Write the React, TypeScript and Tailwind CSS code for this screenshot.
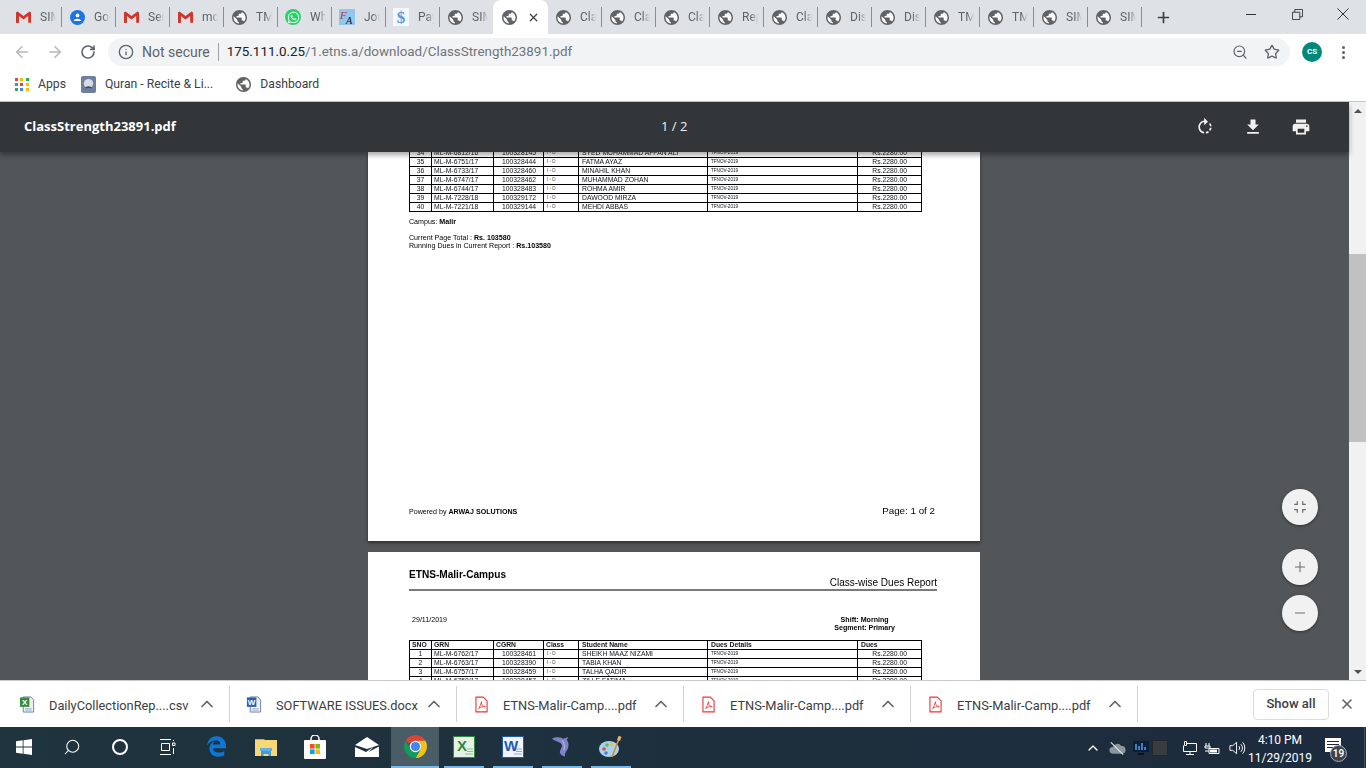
import React from 'react';
import {
  ArrowLeft,
  ArrowRight,
  ChevronUp,
  Info,
  Minus,
  Plus,
  RotateCw,
  Search,
  Star,
  X,
  ZoomOut,
} from 'lucide-react';
import { FaWhatsapp, FaEdgeLegacy } from 'react-icons/fa';

const GLOBE =
  'M12 2C6.48 2 2 6.48 2 12s4.48 10 10 10 10-4.48 10-10S17.52 2 12 2zm-1 17.93c-3.95-.49-7-3.85-7-7.93 0-.62.08-1.21.21-1.79L9 15v1c0 1.1.9 2 2 2v1.93zm6.9-2.54c-.26-.81-1-1.39-1.9-1.39h-1v-3c0-.55-.45-1-1-1H8v-2h2c.55 0 1-.45 1-1V7h2c1.1 0 2-.9 2-2v-.41c2.93 1.19 5 4.06 5 7.41 0 2.08-.8 3.97-2.1 5.39z';

const Globe = () => (
  <svg viewBox="2 2 20 20" className="w-[15px] h-[15px] shrink-0" fill="#5f6368">
    <circle cx="12" cy="12" r="10" fill="#fff" />
    <path d={GLOBE} />
  </svg>
);

const Gmail = () => (
  <svg viewBox="0 0 16 12" className="w-[15px] h-[12px] shrink-0">
    <path d="M0 1.2 1.6 0 8 5 14.4 0 16 1.2V12h-3V4.8L8 8.7 3 4.8V12H0z" fill="#d0352b" />
    <path d="M3 4.8V12H0V1.2z" fill="#c5392f" />
  </svg>
);

const Contacts = () => (
  <svg viewBox="0 0 16 16" className="w-[15px] h-[15px] shrink-0">
    <circle cx="8" cy="8" r="8" fill="#1a73e8" />
    <circle cx="8" cy="5.8" r="2" fill="#fff" />
    <path d="M4 11.8c0-1.8 2.4-2.6 4-2.6s4 .8 4 2.6z" fill="#fff" />
  </svg>
);

const Whats = () => (
  <span className="w-[16px] h-[16px] rounded-full bg-[#25d366] flex items-center justify-center shrink-0">
    <FaWhatsapp className="w-[13px] h-[13px] text-white" />
  </span>
);

const FaFav = () => (
  <svg viewBox="0 0 16 16" className="w-[16px] h-[16px] shrink-0">
    <rect width="16" height="16" fill="#8fc7ee" />
    <text x="1" y="10" fontSize="11" fontStyle="italic" fontFamily="Liberation Serif, serif" fill="#c8332e">F</text>
    <text x="7" y="15" fontSize="10" fontStyle="italic" fontFamily="Liberation Serif, serif" fill="#111">A</text>
  </svg>
);

const PayFav = () => (
  <span className="w-[16px] h-[18px] bg-[#f4f7fb] flex items-center justify-center shrink-0 text-[#5b9ad6] text-[17px] font-bold leading-none font-['Liberation_Serif',serif]">
    $
  </span>
);

const tabs: { label: string; icon: React.ReactNode }[] = [
  { label: 'SIMS Login', icon: <Gmail /> },
  { label: 'Google', icon: <Contacts /> },
  { label: 'Sent Mail', icon: <Gmail /> },
  { label: 'mcs', icon: <Gmail /> },
  { label: 'TMS', icon: <Globe /> },
  { label: 'WhatsApp', icon: <Whats /> },
  { label: 'Journal', icon: <FaFav /> },
  { label: 'Payment', icon: <PayFav /> },
  { label: 'SIMS', icon: <Globe /> },
  { label: '', icon: <Globe /> },
  { label: 'Class', icon: <Globe /> },
  { label: 'Class', icon: <Globe /> },
  { label: 'Class', icon: <Globe /> },
  { label: 'Report', icon: <Globe /> },
  { label: 'Class', icon: <Globe /> },
  { label: 'Discount', icon: <Globe /> },
  { label: 'Discount', icon: <Globe /> },
  { label: 'TMS', icon: <Globe /> },
  { label: 'TMS', icon: <Globe /> },
  { label: 'SIMS', icon: <Globe /> },
  { label: 'SIMS', icon: <Globe /> },
];

const TabStrip = () => (
  <div className="h-[34px] bg-[#dee1e6] flex items-center pl-[8px] shrink-0">
    {tabs.map((t, i) =>
      i === 9 ? (
        <div key={i} className="w-[55px] h-[34px] bg-white rounded-t-[8px] flex items-center pl-[9px] -ml-px">
          {t.icon}
          <X className="w-[13px] h-[13px] ml-[10px] text-[#3c4043]" strokeWidth={2.2} />
        </div>
      ) : (
        <React.Fragment key={i}>
          <div className="w-[53px] h-[34px] flex items-center pl-[7px]">
            <span className="w-[16px] flex justify-center shrink-0">{t.icon}</span>
            <span className="ml-[9px] w-[16px] overflow-hidden whitespace-nowrap text-[12px] text-[#5f6368] [mask-image:linear-gradient(to_right,black_55%,transparent)]">
              {t.label}
            </span>
          </div>
          {i !== 8 ? <span className="w-px h-[20px] bg-[#8a8e93] shrink-0" /> : <span className="w-px shrink-0" />}
        </React.Fragment>
      ),
    )}
    <Plus className="w-[17px] h-[17px] ml-[13px] text-[#3c4043]" strokeWidth={2.4} />
    <div className="ml-auto flex h-[28px] self-start">
      <div className="w-[46px] flex items-center justify-center">
        <span className="w-[10px] h-px bg-[#333]" />
      </div>
      <div className="w-[46px] flex items-center justify-center">
        <svg viewBox="0 0 12 12" className="w-[11px] h-[11px]" fill="none" stroke="#333">
          <path d="M.5 3.5h8v8h-8zM3 3.5v-3h8.500v8H8.500" />
        </svg>
      </div>
      <div className="w-[46px] flex items-center justify-center">
        <svg viewBox="0 0 12 12" className="w-[12px] h-[12px]" fill="none" stroke="#333">
          <path d="M.5.5l11 11M11.500.5l-11 11" />
        </svg>
      </div>
    </div>
  </div>
);

const Toolbar = () => (
  <div className="h-[36px] bg-white flex items-center pl-[5px] shrink-0">
    <div className="w-[33px] flex justify-center">
      <ArrowLeft className="w-[18px] h-[18px] text-[#b4b7bb]" strokeWidth={2} />
    </div>
    <div className="w-[33px] flex justify-center">
      <ArrowRight className="w-[18px] h-[18px] text-[#b4b7bb]" strokeWidth={2} />
    </div>
    <div className="w-[33px] flex justify-center">
      <RotateCw className="w-[16px] h-[16px] text-[#5f6368]" strokeWidth={2.4} />
    </div>
    <div className="ml-[4px] w-[1182px] h-[28px] rounded-full bg-[#f1f3f4] flex items-center pl-[10px] pr-[10px]">
      <Info className="w-[16px] h-[16px] text-[#5f6368]" strokeWidth={2} />
      <span className="ml-[8px] text-[14px] text-[#5f6368]">Not secure</span>
      <span className="ml-[8px] w-px h-[18px] bg-[#9aa0a6]" />
      <span className="ml-[8px] text-[13.4px] text-[#70757a]">
        <span className="text-[#202124]">175.111.0.25</span>/1.etns.a/download/ClassStrength23891.pdf
      </span>
      <ZoomOut className="ml-auto w-[16px] h-[16px] text-[#5f6368]" strokeWidth={1.8} />
      <Star className="ml-[16px] w-[16px] h-[16px] text-[#5f6368]" strokeWidth={2} />
    </div>
    <span className="ml-[12px] w-[20px] h-[20px] rounded-full bg-[#00897b] text-white text-[8px] font-bold flex items-center justify-center">
      CS
    </span>
    <span className="ml-[20px] flex flex-col gap-[2px]">
      <span className="w-[3px] h-[3px] rounded-full bg-[#5f6368]" />
      <span className="w-[3px] h-[3px] rounded-full bg-[#5f6368]" />
      <span className="w-[3px] h-[3px] rounded-full bg-[#5f6368]" />
    </span>
  </div>
);

const appsColors = ['#ea4335', '#fbbc04', '#34a853', '#4285f4', '#ea4335', '#fbbc04', '#34a853', '#4285f4', '#fbbc04'];

const Bookmarks = () => (
  <div className="h-[32px] bg-white border-b border-[#c4c6c9] flex items-center pl-[15px] pb-[2px] text-[12.2px] text-[#3c4043] shrink-0">
    <span className="grid grid-cols-3 gap-[2px] w-[14px]">
      {appsColors.map((c, i) => (
        <span key={i} className="w-[3px] h-[3px]" style={{ background: c }} />
      ))}
    </span>
    <span className="ml-[9px]">Apps</span>
    <svg viewBox="0 0 16 18" className="ml-[15px] w-[15px] h-[17px]">
      <rect width="16" height="18" rx="2" fill="#6d7f9c" />
      <circle cx="8" cy="8" r="5" fill="#d5dbe6" />
      <path d="M4 13c1-3 7-3 8 0z" fill="#3d4a66" />
    </svg>
    <span className="ml-[9px]">Quran - Recite &amp; Li...</span>
    <span className="ml-[23px]">
      <Globe />
    </span>
    <span className="ml-[9px]">Dashboard</span>
  </div>
);

type Row = [string, string, string, string, string];

const topRows: Row[] = [
  ['34', 'ML-M-6812/16', '100328145', 'SYED MUHAMMAD AFFAN ALI', ''],
  ['35', 'ML-M-6751/17', '100328444', 'FATMA AYAZ', ''],
  ['36', 'ML-M-6733/17', '100328460', 'MINAHIL KHAN', ''],
  ['37', 'ML-M-6747/17', '100328462', 'MUHAMMAD ZOHAN', ''],
  ['38', 'ML-M-6744/17', '100328483', 'ROHMA AMIR', ''],
  ['39', 'ML-M-7228/18', '100329172', 'DAWOOD MIRZA', ''],
  ['40', 'ML-M-7221/18', '100329144', 'MEHDI ABBAS', ''],
];

const bottomRows: Row[] = [
  ['1', 'ML-M-6762/17', '100328461', 'SHEIKH MAAZ NIZAMI', ''],
  ['2', 'ML-M-6763/17', '100328390', 'TABIA KHAN', ''],
  ['3', 'ML-M-6757/17', '100328459', 'TALHA QADIR', ''],
  ['4', 'ML-M-6758/17', '100328457', 'ZILLE FATIMA', ''],
];

const cell = 'border border-black p-0 h-[9px] leading-[8px] overflow-hidden whitespace-nowrap';

const DuesTable = ({ rows, header }: { rows: Row[]; header?: boolean }) => (
  <table className="w-[512px] table-fixed border-collapse text-[6.8px] text-[#10131a]">
    <colgroup>
      <col className="w-[22px]" />
      <col className="w-[62px]" />
      <col className="w-[50px]" />
      <col className="w-[35px]" />
      <col className="w-[129px]" />
      <col className="w-[150px]" />
      <col className="w-[64px]" />
    </colgroup>
    <tbody>
      {header && (
        <tr className="font-bold">
          <td className={`${cell} pl-[2px]`}>SNO</td>
          <td className={`${cell} pl-[2px]`}>GRN</td>
          <td className={`${cell} pl-[2px]`}>CGRN</td>
          <td className={`${cell} pl-[2px]`}>Class</td>
          <td className={`${cell} pl-[3px]`}>Student Name</td>
          <td className={`${cell} pl-[3px]`}>Dues Details</td>
          <td className={`${cell} pl-[3px]`}>Dues</td>
        </tr>
      )}
      {rows.map((r) => (
        <tr key={r[0]}>
          <td className={`${cell} text-center`}>{r[0]}</td>
          <td className={`${cell} pl-[2px]`}>{r[1]}</td>
          <td className={`${cell} pl-[8px]`}>{r[2]}</td>
          <td className={`${cell} pl-[3px] text-[4.6px] text-[#5a4a3a] align-bottom`}>I - D</td>
          <td className={`${cell} pl-[3px]`}>{r[3]}</td>
          <td className={`${cell} pl-[3px] text-[4.6px] align-bottom`}>TFNOV-2019</td>
          <td className={`${cell} pr-[14px] text-right`}>Rs.2280.00</td>
        </tr>
      ))}
    </tbody>
  </table>
);

const PdfPages = () => (
  <div className="flex flex-col items-center gap-[11px] h-full overflow-hidden bg-[#525659] pr-[1px]">
    <div className="w-[612px] h-[389px] shrink-0 bg-white shadow-[0_2px_3px_rgba(0,0,0,0.45)] px-[41px] overflow-hidden flex flex-col font-['Liberation_Sans',sans-serif] blur-[0.3px] text-black">
      <div className="-mt-[4px]">
        <DuesTable rows={topRows} />
      </div>
      <p className="mt-[6px] text-[7.1px] leading-[8px]">
        Campus: <b>Malir</b>
      </p>
      <p className="mt-[8px] text-[7.1px] leading-[8px]">
        Current Page Total : <b>Rs. 103580</b>
      </p>
      <p className="text-[7.1px] leading-[8px]">
        Running Dues in Current Report : <b>Rs.103580</b>
      </p>
      <div className="mt-auto mb-[22px] flex items-center justify-between pr-[4px]">
        <span className="text-[7.1px] pt-[2px]">
          Powered by <b>ARWAJ SOLUTIONS</b>
        </span>
        <span className="text-[9.8px]">Page: 1 of 2</span>
      </div>
    </div>
    <div className="w-[612px] h-[300px] shrink-0 bg-white px-[41px] flex flex-col font-['Liberation_Sans',sans-serif] blur-[0.3px] text-black">
      <div className="w-[528px] pt-[16px] border-b-[2px] border-[#7a7a7a] h-[39px] relative">
        <p className="text-[10.1px] leading-[14px] font-bold">ETNS-Malir-Campus</p>
        <p className="text-[10px] leading-[12px] text-right -mt-[5px]">Class-wise Dues Report</p>
      </div>
      <div className="w-[528px] mt-[25px] h-[24px] flex justify-between text-[7.1px] leading-[8px]">
        <span className="pl-[3px]">29/11/2019</span>
        <span className="pr-[42px] text-center font-bold">
          Shift: Morning
          <br />
          Segment: Primary
        </span>
      </div>
      <div>
        <DuesTable rows={bottomRows} header />
      </div>
    </div>
  </div>
);

const MIcon = ({ d, className }: { d: string; className: string }) => (
  <svg viewBox="0 0 24 24" className={className} fill="currentColor">
    <path d={d} />
  </svg>
);

const Fab = ({ children, className }: { children: React.ReactNode; className?: string }) => (
  <div
    className={`w-[36px] h-[36px] rounded-full bg-[#f1f1f1] shadow-[0_1px_3px_rgba(0,0,0,0.4)] flex items-center justify-center text-[#6b6f72] ${className ?? ''}`}
  >
    {children}
  </div>
);

const Viewer = () => (
  <div className="flex-1 flex min-h-0">
    <div className="w-[1349px] flex flex-col relative min-h-0">
      <div className="h-[50px] shrink-0 bg-[#323639] shadow-[0_3px_5px_rgba(0,0,0,0.35)] flex items-center pl-[24px] text-white relative z-10">
        <span className="w-[300px] text-[13px] font-bold font-['Open_Sans',sans-serif]">ClassStrength23891.pdf</span>
        <span className="ml-[337px] text-[13px] text-[#f1f1f1] font-['Open_Sans',sans-serif]">1 / 2</span>
        <div className="ml-auto pr-[38px] flex gap-[28px]">
          <MIcon
            className="w-[20px] h-[20px] text-[#f1f1f1]"
            d="M15.55 5.55L11 1v3.07C7.06 4.56 4 7.92 4 12s3.05 7.44 7 7.93v-2.02c-2.84-.48-5-2.94-5-5.91s2.16-5.43 5-5.91V10l4.55-4.45zM19.93 11c-.17-1.39-.72-2.73-1.62-3.89l-1.42 1.42c.54.75.88 1.6 1.02 2.47h2.02zM13 17.9v2.02c1.39-.17 2.74-.71 3.9-1.61l-1.44-1.44c-.75.54-1.59.89-2.46 1.03zm3.89-2.42l1.42 1.41c.9-1.16 1.45-2.5 1.62-3.89h-2.02c-.14.87-.48 1.72-1.02 2.48z"
          />
          <MIcon className="w-[20px] h-[20px] text-[#f1f1f1]" d="M19 9h-4V3H9v6H5l7 7 7-7zM5 18v2h14v-2H5z" />
          <MIcon
            className="w-[20px] h-[20px] text-[#f1f1f1]"
            d="M19 8H5c-1.66 0-3 1.34-3 3v6h4v4h12v-4h4v-6c0-1.66-1.34-3-3-3zm-3 11H8v-5h8v5zm3-7c-.55 0-1-.45-1-1s.45-1 1-1 1 .45 1 1-.45 1-1 1zm-1-9H6v4h12V3z"
          />
        </div>
      </div>
      <div className="flex-1 min-h-0">
        <PdfPages />
      </div>
      <div className="absolute right-[31px] top-[387px] flex flex-col">
        <Fab>
          <MIcon className="w-[20px] h-[20px]" d="M5 16h3v3h1.500v-4.500H5v1.500zm3-8H5v1.500h4.500V5H8v3zm6.500 11H16v-3h3v-1.500h-4.500V19zM16 8V5h-1.500v4.500H19V8h-3z" />
        </Fab>
        <Fab className="mt-[24px]">
          <Plus className="w-[16px] h-[16px]" strokeWidth={1.6} />
        </Fab>
        <Fab className="mt-[10px]">
          <Minus className="w-[16px] h-[16px]" strokeWidth={1.6} />
        </Fab>
      </div>
    </div>
    <div className="w-[17px] bg-[#f1f1f1] flex flex-col items-center">
      <span className="mt-[7px] w-0 h-0 border-x-[4px] border-x-transparent border-b-[4px] border-b-[#505050]" />
      <span className="mt-[141px] w-full h-[188px] bg-[#c1c1c1]" />
      <span className="mt-auto mb-[6px] w-0 h-0 border-x-[4px] border-x-transparent border-t-[4px] border-t-[#505050]" />
    </div>
  </div>
);

const PdfFile = () => (
  <svg viewBox="0 0 14 18" className="w-[13px] h-[17px] shrink-0" fill="none" stroke="#e53935" strokeWidth="1.2">
    <path d="M1 1h8l4 4v12H1z" strokeLinejoin="round" />
    <path d="M7 6c-.6 2 1 5 4 5.500-2-.5-6 0-7 2 .8-2 2.500-4.500 3-7.500z" strokeWidth=".9" />
  </svg>
);

const OfficeFile = ({ letter, color }: { letter: string; color: string }) => (
  <svg viewBox="0 0 16 18" className="w-[16px] h-[17px] shrink-0">
    <path d="M4 1h8l3 3v13H4z" fill="#eef2f8" stroke="#6b7fa3" />
    <rect x="0.500" y="1.500" width="10" height="10" fill={color} />
    <text x="5.500" y="9.500" fontSize="8.500" fontWeight="bold" textAnchor="middle" fill="#fff" fontFamily="Liberation Sans, sans-serif">
      {letter}
    </text>
    <path d="M6 13.500h7M6 15h7" stroke="#8fa2c4" strokeWidth=".8" />
  </svg>
);

const downloads: { name: string; icon: React.ReactNode }[] = [
  { name: 'DailyCollectionRep....csv', icon: <OfficeFile letter="X" color="#3b8a3e" /> },
  { name: 'SOFTWARE ISSUES.docx', icon: <OfficeFile letter="W" color="#2b5fb3" /> },
  { name: 'ETNS-Malir-Camp....pdf', icon: <PdfFile /> },
  { name: 'ETNS-Malir-Camp....pdf', icon: <PdfFile /> },
  { name: 'ETNS-Malir-Camp....pdf', icon: <PdfFile /> },
];

const DownloadBar = () => (
  <div className="h-[47px] bg-white border-t border-[#c9cbce] flex items-center pl-[3px] pr-[11px] shrink-0">
    {downloads.map((d, i) => (
      <div key={i} className="w-[227px] h-[36px] border-r border-[#d0d2d5] flex items-center pl-[16px]">
        <span className="w-[16px] flex justify-center">{d.icon}</span>
        <span className="ml-[14px] w-[148px] text-[12.8px] text-[#3c4043] whitespace-nowrap pt-[3px]">{d.name}</span>
        <ChevronUp className="w-[20px] h-[20px] text-[#5f6368]" strokeWidth={2} />
      </div>
    ))}
    <div className="ml-auto w-[76px] h-[31px] border border-[#dadce0] rounded-[4px] flex items-center justify-center text-[13px] font-medium text-[#3c4043]">
      Show all
    </div>
    <X className="ml-[10px] w-[16px] h-[16px] text-[#5f6368]" strokeWidth={2.4} />
  </div>
);

const TaskItem = ({
  children,
  className,
  running,
  full,
}: {
  children: React.ReactNode;
  className: string;
  running?: boolean;
  full?: boolean;
}) => (
  <div className={`h-full flex flex-col items-center shrink-0 ${className}`}>
    <div className="flex-1 flex items-center justify-center">{children}</div>
    <span className={`h-[2px] ${full ? 'w-full' : 'w-[40px]'} ${running ? 'bg-[#76b9ed]' : ''}`} />
  </div>
);

const WinLogo = () => (
  <svg viewBox="0 0 16 16" className="w-[16px] h-[16px]" fill="#fff">
    <path d="M0 2.300 6.700 1.300V7.600H0zM7.500 1.200 16 0V7.600H7.500zM0 8.400H6.700V14.700L0 13.700zM7.500 8.400H16V16L7.500 14.800z" />
  </svg>
);

const TaskView = () => (
  <svg viewBox="0 0 16 16" className="w-[16px] h-[16px]" fill="none" stroke="#fff">
    <path d="M0 .5h11M0 15.500h11M1.500 4.500h8v7h-8z" />
    <path d="M12.500 4v2.500h2.500V4zM13.500 1v1M13.500 9v6" />
  </svg>
);

const FolderIcon = () => (
  <svg viewBox="0 0 22 18" className="w-[22px] h-[18px]">
    <path d="M0 1h9l2 2H0z" fill="#d9a428" />
    <rect y="2" width="22" height="16" fill="#f8d775" />
    <path d="M6 18v-5h10v5h-2.500v-2h-5v2z" fill="#3f9be0" />
    <rect x="5" y="10" width="12" height="3" fill="#5fb0ea" />
  </svg>
);

const StoreIcon = () => (
  <svg viewBox="0 0 24 24" className="w-[24px] h-[24px]">
    <path d="M8 6V4a4 4 0 0 1 8 0v2" fill="none" stroke="#fff" strokeWidth="1.500" />
    <rect x="1" y="5" width="22" height="19" rx="1" fill="#fff" />
    <rect x="7" y="9" width="4.600" height="4.600" fill="#f25022" />
    <rect x="12.400" y="9" width="4.600" height="4.600" fill="#7fba00" />
    <rect x="7" y="14.400" width="4.600" height="4.600" fill="#00a4ef" />
    <rect x="12.400" y="14.400" width="4.600" height="4.600" fill="#ffb900" />
  </svg>
);

const MailIcon = () => (
  <svg viewBox="0 0 24 20" className="w-[24px] h-[20px]" fill="#fff">
    <path d="M0 8 12 0l12 8L12 12z" />
    <path d="M0 10 11 15 19 9.500 13.500 15 24 9.500V20H0z" />
  </svg>
);

const ChromeIcon = () => (
  <svg viewBox="2 2 20 20" className="w-[23px] h-[23px]">
    <path d="M3.340 7A10 10 0 0 1 20.660 7H12A5 5 0 0 0 7.670 9.500Z" fill="#db4437" />
    <path d="M20.660 7A10 10 0 0 1 12 22L16.330 14.500A5 5 0 0 0 12 7Z" fill="#f4c20d" />
    <path d="M3.340 7L7.670 14.500A5 5 0 0 0 16.330 14.500L12 22A10 10 0 0 1 3.340 7Z" fill="#0f9d58" />
    <circle cx="12" cy="12" r="5" fill="#fff" />
    <circle cx="12" cy="12" r="4" fill="#4285f4" />
  </svg>
);

const OfficeApp = ({ letter, color, bg }: { letter: string; color: string; bg: string }) => (
  <svg viewBox="0 0 22 22" className="w-[22px] h-[22px]">
    <rect x="0.500" y="0.500" width="21" height="21" fill={bg} stroke={color} />
    <text x="9" y="15" fontSize="15" fontWeight="bold" textAnchor="middle" fill={color} fontFamily="Liberation Sans, sans-serif">
      {letter}
    </text>
    <path d="M14 13h6M14 15.500h6M12 18h8" stroke={color} strokeWidth=".8" opacity=".6" />
  </svg>
);

const DolphinIcon = () => (
  <svg viewBox="0 0 24 26" className="w-[21px] h-[23px]">
    <path
      d="M1 4c4-2 9-2 13 0l6-2-2 3.500c3 3.500 2.500 9-.5 13-1 1.500-2 3.500-1.500 6-3-.5-5.500-2.500-6-5 0-3 3-5 2.500-8C12 8 7 8 1 4z"
      fill="#7f82c4"
    />
    <path d="M13 6c2 3 3 7 1.500 11" stroke="#b9bbe6" strokeWidth="1.200" fill="none" />
  </svg>
);

const PaintIcon = () => (
  <svg viewBox="0 0 24 24" className="w-[24px] h-[24px]">
    <ellipse cx="10" cy="14" rx="10" ry="8" fill="#a9d3ec" />
    <circle cx="5" cy="14" r="1.800" fill="#d84b4b" />
    <circle cx="8" cy="10" r="1.800" fill="#6fb34a" />
    <circle cx="12.500" cy="9.500" r="1.800" fill="#e9c13f" />
    <circle cx="7" cy="18" r="1.800" fill="#4b7fd8" />
    <path d="M21 1 13 22" stroke="#d88a2e" strokeWidth="1.600" />
    <path d="M19.500 1l3 1-1.500 4-3-1z" fill="#e0b070" />
  </svg>
);

const TrayIcon = ({ children, className }: { children: React.ReactNode; className: string }) => (
  <div className={`flex justify-center items-center shrink-0 ${className}`}>{children}</div>
);

const Taskbar = () => (
  <div className="h-[41px] shrink-0 bg-gradient-to-r from-[#1f343e] to-[#1c2b3d] flex items-center">
    <TaskItem className="w-[48px]"><WinLogo /></TaskItem>
    <TaskItem className="w-[48px]"><Search className="w-[18px] h-[18px] text-white -scale-x-100" strokeWidth={1.4} /></TaskItem>
    <TaskItem className="w-[48px]"><span className="w-[16px] h-[16px] rounded-full border-[2px] border-white" /></TaskItem>
    <TaskItem className="w-[48px]"><TaskView /></TaskItem>
    <TaskItem className="w-[49px]"><FaEdgeLegacy className="w-[21px] h-[21px] text-[#0c78d6]" /></TaskItem>
    <TaskItem className="w-[49px]"><FolderIcon /></TaskItem>
    <TaskItem className="w-[49px]"><StoreIcon /></TaskItem>
    <TaskItem className="w-[48px] ml-[4px]"><MailIcon /></TaskItem>
    <TaskItem className="w-[48px] bg-[#4a5c66]" running full><ChromeIcon /></TaskItem>
    <TaskItem className="w-[49px]" running><OfficeApp letter="X" color="#2d8a3e" bg="#e6f3e4" /></TaskItem>
    <TaskItem className="w-[49px]" running><OfficeApp letter="W" color="#1e5bb8" bg="#f1f5fb" /></TaskItem>
    <TaskItem className="w-[49px]" running><DolphinIcon /></TaskItem>
    <TaskItem className="w-[49px]" running><PaintIcon /></TaskItem>

    <div className="ml-auto flex items-center h-full text-white">
      <TrayIcon className="w-[20px]"><ChevronUp className="w-[16px] h-[16px] text-white" strokeWidth={2} /></TrayIcon>
      <TrayIcon className="w-[24px] ml-[2px]">
        <svg viewBox="0 0 18 14" className="w-[17px] h-[14px]">
          <path d="M4 13a3.500 3.500 0 0 1 0-7 5 5 0 0 1 9-1 4 4 0 0 1 1 8z" fill="#8c969c" />
          <path d="M2 1l13 13" stroke="#dfe3e6" strokeWidth="1.200" />
        </svg>
      </TrayIcon>
      <TrayIcon className="w-[20px] ml-[2px]">
        <svg viewBox="0 0 16 16" className="w-[16px] h-[16px]">
          <rect y="1" width="16" height="11" fill="#0b1f3d" />
          <path d="M3 10V4M6 10V6M9 10V3M12 10V7" stroke="#4fa3e0" strokeWidth="1.500" />
          <rect x="5" y="13" width="6" height="2" fill="#111" />
        </svg>
      </TrayIcon>
      <TrayIcon className="w-[18px]"><span className="w-[16px] h-[16px] bg-[#3a3d40] border border-[#25282b]" /></TrayIcon>
      <TrayIcon className="w-[20px] ml-[10px]">
        <svg viewBox="0 0 16 16" className="w-[16px] h-[16px]" fill="none" stroke="#fff">
          <path d="M3.500 1.500h2v4h-2zM5.500 3.500h10v8h-13v-6M9 11.500v3M5 14.500h8" />
        </svg>
      </TrayIcon>
      <TrayIcon className="w-[26px]">
        <svg viewBox="0 0 16 16" className="w-[16px] h-[16px]" fill="none" stroke="#fff">
          <path d="M5 8.500h10v5H5zM1 11h4M2 3v3M5 3v3M1 6h5v2H1z" />
          <rect x="6" y="9.500" width="7" height="3" fill="#fff" stroke="none" />
        </svg>
      </TrayIcon>
      <TrayIcon className="w-[24px]">
        <svg viewBox="0 0 18 16" className="w-[17px] h-[16px]" fill="none" stroke="#fff">
          <path d="M1 5.500h3L8 2v12L4 10.500H1zM10.500 6a3 3 0 0 1 0 4M12.500 4a6 6 0 0 1 0 8M14.500 2a9 9 0 0 1 0 12" />
        </svg>
      </TrayIcon>
      <div className="w-[62px] flex flex-col items-center text-[12px] leading-[18px] pt-[2px]">
        <span>4:10 PM</span>
        <span>11/29/2019</span>
      </div>
      <div className="w-[42px] ml-[1px] h-full flex justify-center items-center">
        <div className="relative w-[16px] h-[14px] bg-white -mt-[6px] flex flex-col justify-center gap-[2px] px-[2px]">
          <span className="h-px bg-[#1c2b3d]" />
          <span className="h-px bg-[#1c2b3d]" />
          <span className="h-px bg-[#1c2b3d]" />
          <span className="absolute left-[5px] top-[7px] w-[17px] h-[17px] rounded-full bg-[#3b444b] border border-[#aab] text-white text-[10px] font-semibold flex items-center justify-center">
            19
          </span>
        </div>
      </div>
      <span className="w-[10px]" />
      <span className="w-px h-full bg-[#46545f]" />
      <span className="w-[1px]" />
    </div>
  </div>
);

export default function App() {
  return (
    <div className="w-screen h-screen overflow-hidden flex flex-col font-['Roboto',sans-serif]">
      <TabStrip />
      <Toolbar />
      <Bookmarks />
      <Viewer />
      <DownloadBar />
      <Taskbar />
    </div>
  );
}
